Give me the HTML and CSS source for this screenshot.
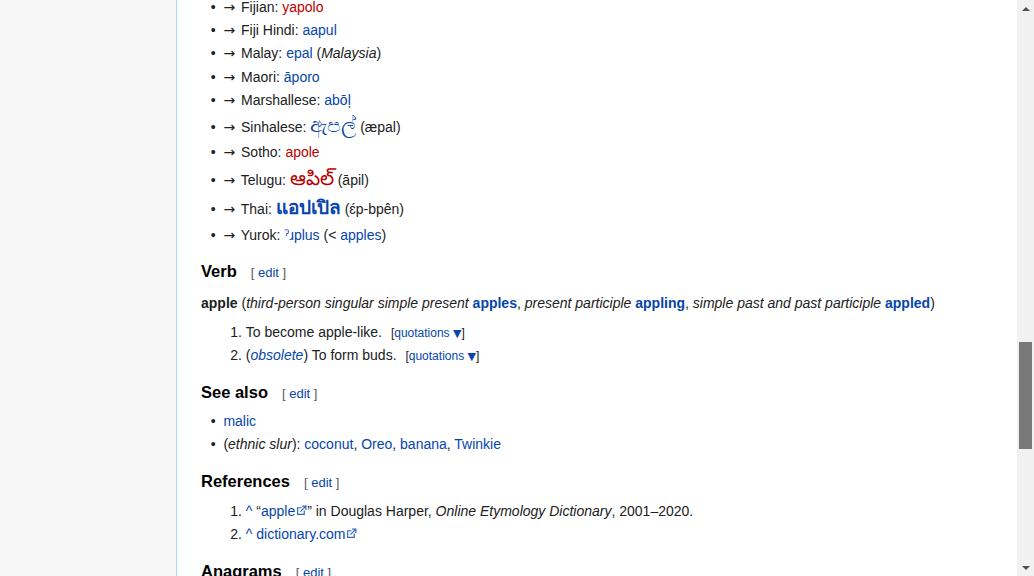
FILE: index.html
```html
<!DOCTYPE html>
<html lang="en">
<head>
<meta charset="utf-8">
<title>apple - Wiktionary</title>
<link rel="stylesheet" href="styles.css">
</head>
<body>
<div class="page">
  <aside class="sidebar"></aside>
  <main class="content">
    <ul class="desc first">
      <li><span class="arr">→</span> Fijian: <a class="new" href="#">yapolo</a></li>
      <li><span class="arr">→</span> Fiji Hindi: <a href="#">aapul</a></li>
      <li><span class="arr">→</span> Malay: <a href="#">epal</a> (<i>Malaysia</i>)</li>
      <li><span class="arr">→</span> Maori: <a href="#">āporo</a></li>
      <li><span class="arr">→</span> Marshallese: <a href="#">abōļ</a></li>
      <li class="tall-sin"><span class="arr">→</span> Sinhalese: <a class="script sinh" href="#">ඇපල්</a> (æpal)</li>
      <li><span class="arr">→</span> Sotho: <a class="new" href="#">apole</a></li>
      <li class="tall-tel"><span class="arr">→</span> Telugu: <a class="new script telu" href="#">ఆపిల్</a> (āpil)</li>
      <li class="tall-thai"><span class="arr">→</span> Thai: <a class="script thai" href="#">แอปเปิล</a> (ɛ́p-bpên)</li>
      <li><span class="arr">→</span> Yurok: <a href="#">ˀɹplus</a> (&lt; <a href="#">apples</a>)</li>
    </ul>

    <h4 class="heading h-verb">Verb<span class="editsection">[ <a href="#">edit</a> ]</span></h4>
    <p class="headword"><b>apple</b> (<i>third-person singular simple present</i> <a class="strong" href="#">apples</a>, <i>present participle</i> <a class="strong" href="#">appling</a>, <i>simple past and past participle</i> <a class="strong" href="#">appled</a>)</p>
    <ol class="defs">
      <li>To become apple-like. <span class="quot">[<a href="#">quotations <span class="tri">▼</span></a>]</span></li>
      <li>(<a href="#"><i>obsolete</i></a>) To form buds. <span class="quot">[<a href="#">quotations <span class="tri">▼</span></a>]</span></li>
    </ol>

    <h4 class="heading">See also<span class="editsection">[ <a href="#">edit</a> ]</span></h4>
    <ul class="desc">
      <li><a href="#">malic</a></li>
      <li>(<i>ethnic slur</i>): <a href="#">coconut</a>, <a href="#">Oreo</a>, <a href="#">banana</a>, <a href="#">Twinkie</a></li>
    </ul>

    <h3 class="heading h-refs">References<span class="editsection">[ <a href="#">edit</a> ]</span></h3>
    <ol class="refs">
      <li><a href="#">^</a> “<a class="ext" href="#">apple<svg class="exticon" width="11" height="11" viewBox="0 0 10 10"><path d="M5 2.5H1.5v6h6V5" fill="none" stroke="#3366bb" stroke-width="1.1"/><path d="M4 6l4.5-4.5M5.5 1h3.5v3.5" fill="none" stroke="#3366bb" stroke-width="1.1"/></svg></a>” in Douglas Harper, <i>Online Etymology Dictionary</i>, 2001–2020.</li>
      <li><a href="#">^</a> <a class="ext" href="#">dictionary.com<svg class="exticon" width="11" height="11" viewBox="0 0 10 10"><path d="M5 2.5H1.5v6h6V5" fill="none" stroke="#3366bb" stroke-width="1.1"/><path d="M4 6l4.5-4.5M5.5 1h3.5v3.5" fill="none" stroke="#3366bb" stroke-width="1.1"/></svg></a></li>
    </ol>

    <h3 class="heading">Anagrams<span class="editsection">[ <a href="#">edit</a> ]</span></h3>
  </main>
  <div class="scrollbar">
    <div class="sb-btn"><span class="tri-up"></span></div>
    <div class="sb-track"><div class="sb-thumb"></div></div>
    <div class="sb-btn"><span class="tri-down"></span></div>
  </div>
</div>
</body>
</html>
```

FILE: styles.css
```css
html, body {
  margin: 0;
  padding: 0;
  background: #ffffff;
}

.page {
  display: flex;
  height: 576px;
  overflow: hidden;
  font-family: "Liberation Sans", Arial, sans-serif;
  color: #202122;
}

.sidebar {
  width: 176px;
  flex: none;
  background: #f6f6f6;
  border-right: 1px solid #a7d7f9;
}

.content {
  flex: 1;
  min-width: 0;
  padding: 0 24px;
  font-size: 14px;
  line-height: 1.6;
  overflow: hidden;
}

a {
  color: #0645ad;
  text-decoration: none;
}

a.new {
  color: #ba0000;
}

a.strong {
  font-weight: bold;
}

.arr {
  font-family: "DejaVu Sans", sans-serif;
  font-size: 14px;
  line-height: 1;
  margin-right: 2px;
}

ul.desc {
  margin: 3px 0 0 22.4px;
  padding: 0;
  list-style: disc;
}

ul.desc li::marker {
  content: "\2022\00a0\00a0";
}

ul.desc.first {
  margin-top: -4.5px;
}

ul.desc li,
ol li {
  margin-bottom: 0.8px;
}

ul.desc.first li {
  margin-bottom: 1.1px;
}

.script {
  line-height: 10px;
}

.sinh {
  font-size: 20px;
}

.telu {
  font-size: 20px;
}

.thai {
  font-size: 19px;
  font-weight: bold;
}

li.tall-sin {
  padding-top: 3px;
  padding-bottom: 2px;
}

li.tall-tel {
  padding-top: 4px;
  padding-bottom: 3px;
}

li.tall-thai {
  padding-top: 3px;
  padding-bottom: 2px;
}

.heading {
  margin: 13px 0 0 0;
  padding: 0;
  font-size: 16.5px;
  line-height: 26px;
  font-weight: bold;
  color: #000000;
}

.heading.h-verb {
  margin-top: 12px;
}

.heading.h-refs {
  margin-top: 12px;
}

.editsection {
  font-size: 13px;
  font-weight: normal;
  margin-left: 14px;
  color: #54595d;
}

.headword {
  margin: 6px 0 6px 0;
}

ol.defs,
ol.refs {
  margin: 0 0 0 44.8px;
  padding: 0;
}

ol.refs {
  margin-top: 4px;
}

.quot {
  font-size: 12px;
  margin-left: 5px;
}

.tri {
  font-family: "DejaVu Sans", sans-serif;
  font-size: 11px;
  line-height: 1;
}

.exticon {
  display: inline-block;
  vertical-align: baseline;
  margin-left: 1px;
}

.scrollbar {
  width: 17px;
  flex: none;
  background: #f1f1f1;
  display: flex;
  flex-direction: column;
}

.sb-btn {
  height: 17px;
  flex: none;
  display: flex;
  align-items: center;
  justify-content: center;
}

.tri-up {
  width: 0;
  height: 0;
  border-left: 4px solid transparent;
  border-right: 4px solid transparent;
  border-bottom: 4px solid #505050;
}

.tri-down {
  width: 0;
  height: 0;
  border-left: 4px solid transparent;
  border-right: 4px solid transparent;
  border-top: 4px solid #505050;
}

.sb-track {
  flex: 1;
  padding: 0 2px;
}

.sb-thumb {
  margin-top: 325px;
  height: 107px;
  background: #787878;
}
```
